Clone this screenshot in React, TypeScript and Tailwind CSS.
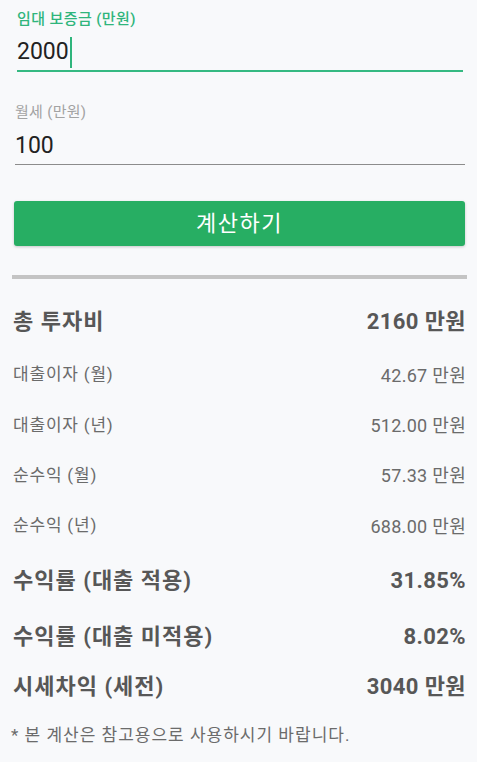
import React from "react";

const FONT = "font-['Roboto','Noto_Sans_CJK_KR',sans-serif]";

type Row = { label: string; value: string; big?: boolean; h: string };

const rows: Row[] = [
  { label: "총 투자비", value: "2160 만원", big: true, h: "h-[55px]" },
  { label: "대출이자 (월)", value: "42.67 만원", h: "h-[52px]" },
  { label: "대출이자 (년)", value: "512.00 만원", h: "h-[49px]" },
  { label: "순수익 (월)", value: "57.33 만원", h: "h-[51px]" },
  { label: "순수익 (년)", value: "688.00 만원", h: "h-[50px]" },
  { label: "수익률 (대출 적용)", value: "31.85%", big: true, h: "h-[59px]" },
  { label: "수익률 (대출 미적용)", value: "8.02%", big: true, h: "h-[52px]" },
  { label: "시세차익 (세전)", value: "3040 만원", big: true, h: "h-[49px]" },
];

export default function App() {
  return (
    <div className={`${FONT} w-[477px] h-[762px] bg-[#f8f9fb] overflow-hidden`}>
      {/* Field 1 */}
      <div className="pt-[9px] ml-[17px] mr-[14px]">
        <div className="h-[20px] leading-[20px] text-[15px] font-medium tracking-[0.4px] text-[#2fb57c]">
          임대 보증금 (만원)
        </div>
        <div className="mt-[9px] h-[28px] flex items-center text-[23px] leading-[28px] text-[#222]">
          <span>2000</span>
          <span className="ml-[1px] w-[2px] h-[31px] bg-[#2fb57c]" />
        </div>
        <div className="mt-[4px] h-[2px] bg-[#35b982]" />
      </div>

      {/* Field 2 */}
      <div className="mt-[30px] ml-[15px] mr-[12px]">
        <div className="h-[20px] leading-[20px] text-[15px] tracking-[0.3px] text-[#a3a3a3]">
          월세 (만원)
        </div>
        <div className="mt-[10px] h-[28px] flex items-center text-[23px] leading-[28px] text-[#222]">
          100
        </div>
        <div className="mt-[4px] h-[1px] bg-[#8c8c8c]" />
      </div>

      {/* Button */}
      <div className="mt-[36px] ml-[14px] mr-[12px]">
        <button className="w-full h-[45px] rounded-[3px] bg-[#27ae63] text-white text-[22px] tracking-[1.5px] shadow-[0_1px_3px_rgba(0,0,0,0.2)] flex items-center justify-center">
          계산하기
        </button>
      </div>

      {/* Divider */}
      <div className="mt-[29px] ml-[12px] mr-[10px] h-[4px] bg-[#c4c4c4]" />

      {/* Results */}
      <div className="pt-[15px] ml-[13px] mr-[11px]">
        {rows.map((r) => (
          <div
            key={r.label}
            className={`${r.h} flex items-center justify-between ${
              r.big
                ? "text-[22px] font-bold text-[#575757]"
                : "text-[17px] text-[#6b6b6b]"
            }`}
          >
            <span className={r.big ? "tracking-[1px]" : "tracking-[0.8px]"}>{r.label}</span>
            <span className={r.big ? "tracking-[0.4px]" : "text-[18px] tracking-[0.3px]"}>{r.value}</span>
          </div>
        ))}
        <div className="h-[50px] flex items-center text-[17px] tracking-[1px] text-[#6b6b6b] -ml-[2px]">
          * 본 계산은 참고용으로 사용하시기 바랍니다.
        </div>
      </div>
    </div>
  );
}
